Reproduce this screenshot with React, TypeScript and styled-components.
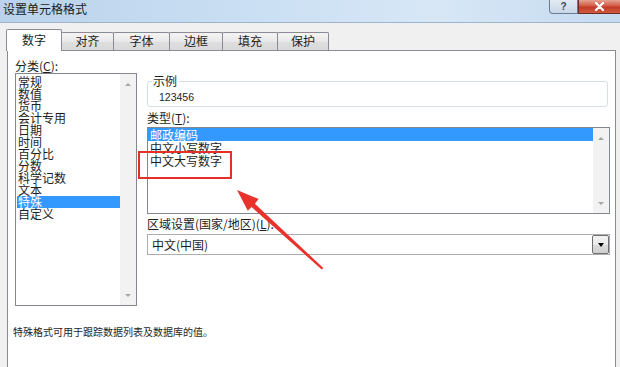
import React from "react";
import styled, { createGlobalStyle } from "styled-components";

const GlobalStyle = createGlobalStyle`
  html, body { margin: 0; padding: 0; }
  body {
    background: #f0f0f0;
    font-family: "Noto Sans CJK SC", "Liberation Sans", sans-serif;
  }
`;

const Window = styled.div`
  position: relative;
  width: 620px;
  height: 367px;
  overflow: hidden;
  background: #f0f0f0;
  color: #1e1e1e;
  font-size: 12px;
`;

const TitleBar = styled.div`
  height: 22px;
  display: flex;
  align-items: flex-start;
  justify-content: space-between;
  background: linear-gradient(to right, #bad2eb 0%, #cadff3 40%, #d7e7f6 70%, #c6dbf0 100%);
  border-bottom: 1px solid #9fb3c9;
`;

const Title = styled.div`
  padding: 2px 0 0 3px;
  font-size: 12px;
  line-height: 13px;
  color: #1b1b1b;
`;

const Controls = styled.div`
  display: flex;
`;

const HelpButton = styled.div`
  width: 27px;
  height: 13px;
  border: 1px solid #6c7c8f;
  border-top: none;
  border-radius: 0 0 0 4px;
  background: linear-gradient(#e3ebf4, #c9d7e6);
  display: flex;
  align-items: center;
  justify-content: center;
  font-family: "Liberation Sans", sans-serif;
  font-size: 10px;
  font-weight: bold;
  color: #3a4656;
`;

const CloseButton = styled.div`
  width: 41px;
  height: 13px;
  border: 1px solid #6b2a22;
  border-top: none;
  border-right: none;
  background: linear-gradient(#e6a394, #d35a45 45%, #c23a28 55%, #cf5a40);
  display: flex;
  align-items: center;
  justify-content: center;
`;

const TabStrip = styled.div`
  height: 27px;
  display: flex;
  align-items: flex-end;
  padding-left: 6px;
  position: relative;
  z-index: 1;
`;

const Tab = styled.div<{ $active?: boolean; $w: number }>`
  box-sizing: border-box;
  width: ${(p) => p.$w}px;
  height: ${(p) => (p.$active ? 22 : 18)}px;
  margin-bottom: ${(p) => (p.$active ? -1 : 0)}px;
  margin-left: -1px;
  border: 1px solid #898c95;
  border-bottom: none;
  border-radius: 2px 2px 0 0;
  background: ${(p) => (p.$active ? "#ffffff" : "linear-gradient(#f4f4f4, #e8e8e8 50%, #dedede 51%, #d9d9d9)")};
  text-align: center;
  line-height: ${(p) => (p.$active ? 19 : 15)}px;
  font-size: 12px;
  color: #1e1e1e;
  &:first-child { margin-left: 0; }
`;

const Panel = styled.div`
  position: relative;
  height: 330px;
  margin: 0 4px 0 7px;
  padding: 8px 5px 0 7px;
  border: 1px solid #898c95;
  background: #ffffff;
`;

const Columns = styled.div`
  display: flex;
  gap: 10px;
`;

const LeftCol = styled.div`
  width: 122px;
  flex: none;
`;

const RightCol = styled.div`
  flex: 1;
  display: flex;
  flex-direction: column;
`;

const FieldLabel = styled.div<{ $top?: number }>`
  height: 14px;
  line-height: 14px;
  margin-top: ${(p) => p.$top ?? 0}px;
  white-space: nowrap;
  font-size: 12px;
  color: #1e1e1e;
`;

const ListBox = styled.div<{ $h: number }>`
  box-sizing: border-box;
  height: ${(p) => p.$h}px;
  border: 1px solid #828790;
  display: flex;
  background: #ffffff;
`;

const ListBody = styled.div<{ $padTop?: number; $padLeft?: number }>`
  flex: 1;
  min-width: 0;
  padding-top: ${(p) => p.$padTop ?? 0}px;
  padding-left: ${(p) => p.$padLeft ?? 0}px;
`;

const ListItem = styled.div<{ $selected?: boolean; $row: number; $indent: number }>`
  height: ${(p) => p.$row}px;
  line-height: ${(p) => p.$row}px;
  padding-left: ${(p) => p.$indent}px;
  white-space: nowrap;
  font-size: 12px;
  background: ${(p) => (p.$selected ? "#3399ff" : "transparent")};
  color: ${(p) => (p.$selected ? "#ffffff" : "#1e1e1e")};
`;

const ScrollBar = styled.div`
  width: 16px;
  flex: none;
  background: #f2f2f2;
  display: flex;
  flex-direction: column;
  align-items: center;
  justify-content: space-between;
  padding: 9px 0 8px;
  box-sizing: border-box;
`;

const ScrollArrow = styled.div<{ $down?: boolean }>`
  width: 0;
  height: 0;
  border-left: 3px solid transparent;
  border-right: 3px solid transparent;
  ${(p) => (p.$down ? "border-top: 3px solid #a6a6a6;" : "border-bottom: 3px solid #a6a6a6;")}
`;

const SampleBox = styled.fieldset`
  margin: 16px 2px 0 0;
  padding: 0 4px 2px 4px;
  border: 1px solid #d5dfe5;
  border-radius: 3px;
  min-width: 0;
`;

const Legend = styled.legend`
  padding: 0 1px;
  line-height: 12px;
  font-size: 12px;
  color: #1e1e1e;
`;

const SampleValue = styled.div`
  margin-left: 7px;
  padding-top: 3px;
  line-height: 14px;
  font-family: "Liberation Sans", sans-serif;
  font-size: 10.5px;
  color: #1e1e1e;
`;

const Combo = styled.div`
  box-sizing: border-box;
  height: 21px;
  margin-top: 3px;
  border: 1px solid #abadb3;
  display: flex;
  align-items: stretch;
  background: #ffffff;
`;

const ComboValue = styled.div`
  flex: 1;
  padding-left: 4px;
  line-height: 19px;
  font-size: 12px;
`;

const DropButton = styled.div`
  box-sizing: border-box;
  width: 17px;
  border: 1px solid #707070;
  border-radius: 2px;
  background: linear-gradient(#f2f2f2, #ebebeb 50%, #dddddd 51%, #cfcfcf);
  display: flex;
  align-items: center;
  justify-content: center;
`;

const DropArrow = styled.div`
  width: 0;
  height: 0;
  border-left: 3.5px solid transparent;
  border-right: 3.5px solid transparent;
  border-top: 4px solid #000000;
`;

const Note = styled.div`
  margin: 19px 0 0 -2px;
  line-height: 14px;
  font-size: 10px;
  color: #1e1e1e;
`;

const Overlay = styled.svg`
  position: absolute;
  left: 0;
  top: 0;
  pointer-events: none;
`;

const tabs = [
  { label: "数字", w: 56 },
  { label: "对齐", w: 53 },
  { label: "字体", w: 57 },
  { label: "边框", w: 54 },
  { label: "填充", w: 56 },
  { label: "保护", w: 52 },
];

const categories = ["常规", "数值", "货币", "会计专用", "日期", "时间", "百分比", "分数", "科学记数", "文本", "特殊", "自定义"];
const types = ["邮政编码", "中文小写数字", "中文大写数字"];

export default function App() {
  return (
    <>
      <GlobalStyle />
      <Window>
        <TitleBar>
          <Title>设置单元格格式</Title>
          <Controls>
            <HelpButton>?</HelpButton>
            <CloseButton>
              <svg width="11" height="9" viewBox="0 0 11 9">
                <path d="M2 1 L9 8 M9 1 L2 8" stroke="#ffffff" strokeWidth="2.2" strokeLinecap="round" />
              </svg>
            </CloseButton>
          </Controls>
        </TitleBar>

        <TabStrip>
          {tabs.map((t, i) => (
            <Tab key={t.label} $w={t.w} $active={i === 0}>
              {t.label}
            </Tab>
          ))}
        </TabStrip>

        <Panel>
          <Columns>
            <LeftCol>
              <FieldLabel>
                分类(<u>C</u>):
              </FieldLabel>
              <ListBox $h={233}>
                <ListBody $padTop={2} $padLeft={1}>
                  {categories.map((c) => (
                    <ListItem key={c} $row={12} $indent={1} $selected={c === "特殊"}>
                      {c}
                    </ListItem>
                  ))}
                </ListBody>
                <ScrollBar>
                  <ScrollArrow />
                  <ScrollArrow $down />
                </ScrollBar>
              </ListBox>
            </LeftCol>

            <RightCol>
              <SampleBox>
                <Legend>示例</Legend>
                <SampleValue>123456</SampleValue>
              </SampleBox>

              <FieldLabel $top={4}>
                类型(<u>T</u>):
              </FieldLabel>
              <ListBox $h={87} style={{ marginTop: 2 }}>
                <ListBody>
                  {types.map((t, i) => (
                    <ListItem key={t} $row={13} $indent={2} $selected={i === 0}>
                      {t}
                    </ListItem>
                  ))}
                </ListBody>
                <ScrollBar>
                  <ScrollArrow />
                  <ScrollArrow $down />
                </ScrollBar>
              </ListBox>

              <FieldLabel $top={3}>
                区域设置(国家/地区)(<u>L</u>):
              </FieldLabel>
              <Combo>
                <ComboValue>中文(中国)</ComboValue>
                <DropButton>
                  <DropArrow />
                </DropButton>
              </Combo>
            </RightCol>
          </Columns>

          <Note>特殊格式可用于跟踪数据列表及数据库的值。</Note>
        </Panel>

        {/* red annotation drawn over the dialog */}
        <Overlay width="620" height="367" viewBox="0 0 620 367">
          <rect x="139" y="152" width="92" height="26" fill="none" stroke="#e5302a" strokeWidth="2" />
          <polygon
            points="237,190 258.6,199 254.9,203.7 323.3,268 321.7,269.5 251.5,206.9 247.8,210.8"
            fill="#e8322b"
          />
        </Overlay>
      </Window>
    </>
  );
}
